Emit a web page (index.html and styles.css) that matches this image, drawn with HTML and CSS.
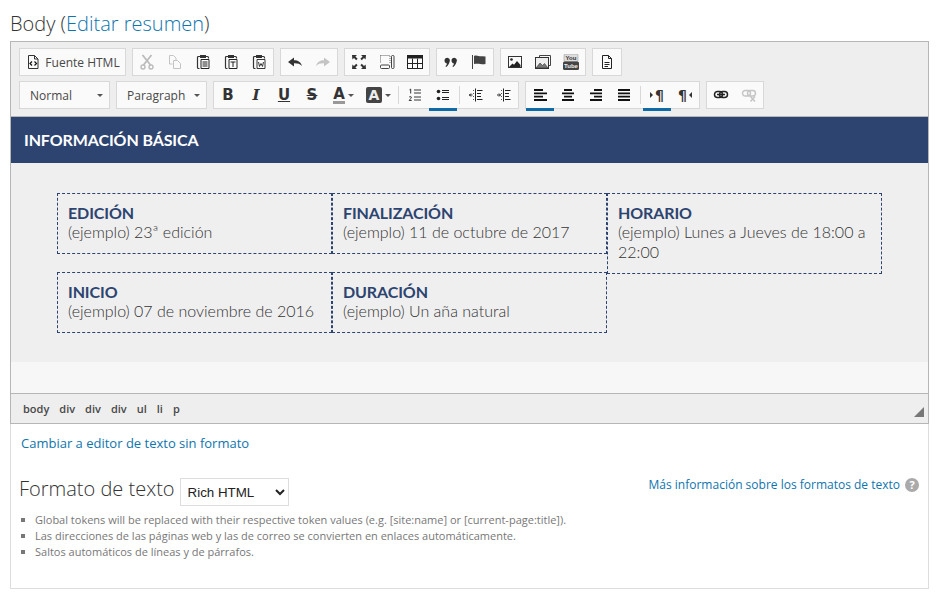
FILE: index.html
```html
<!DOCTYPE html>
<html lang="es">
<head>
    <meta charset="UTF-8">
    <title>Body</title>
    <link rel="stylesheet" href="styles.css">
</head>
<body>
<h2 class="field-title">Body (<a href="#">Editar resumen</a>)</h2>
<div class="field-box">
    <div class="editor">
        <div class="toolbar">
            <div class="toolbar-row">
                <div class="group">
                    <span class="btn btn-text">
                        <svg class="icon" viewBox="0 0 16 16"><path d="M3.500 1.500h6l3.500 3.500v9.500h-9.500z M9.500 1.500v3.500h3.500" fill="none" stroke="#333"/><path d="M7 7.500l-2 2 2 2 M9.500 7.500l2 2-2 2" fill="none" stroke="#111" stroke-width="1.200"/></svg>
                        Fuente HTML
                    </span>
                </div>
                <div class="group">
                    <span class="btn"><svg class="icon" viewBox="0 0 16 16"><path d="M3.500 1l8 10 M12.500 1l-8 10" fill="none" stroke="#bbb" stroke-width="1.800"/><circle cx="4" cy="13" r="2" fill="none" stroke="#bbb" stroke-width="1.400"/><circle cx="12" cy="13" r="2" fill="none" stroke="#bbb" stroke-width="1.400"/></svg></span>
                    <span class="btn"><svg class="icon" viewBox="0 0 16 16"><path d="M2.500 1.500h4l2.500 2.500v2 M2.500 1.500v8.500h3 M6.500 6.500h4l3 3v5h-7z" fill="none" stroke="#c4c4c4"/></svg></span>
                    <span class="btn"><svg class="icon" viewBox="0 0 16 16"><path d="M5 2.500h-1.500q-1 0-1 1v10q0 1 1 1h1 M11 2.500h1.500q1 0 1 1v1" fill="none" stroke="#333" stroke-width="1.200"/><rect x="5" y="1" width="6" height="3" fill="#333"/><path d="M6 5.500h8v9h-8z M7.500 8h5 M7.500 10h5 M7.500 12h5" fill="none" stroke="#222"/></svg></span>
                    <span class="btn"><svg class="icon" viewBox="0 0 16 16"><path d="M5 2.500h-1.500q-1 0-1 1v10q0 1 1 1h1 M11 2.500h1.500q1 0 1 1v1" fill="none" stroke="#333" stroke-width="1.200"/><rect x="5" y="1" width="6" height="3" fill="#333"/><path d="M6 5.500h8v9h-8z M7.500 8h5 M10 8v5" fill="none" stroke="#222"/></svg></span>
                    <span class="btn"><svg class="icon" viewBox="0 0 16 16"><path d="M5 2.500h-1.500q-1 0-1 1v10q0 1 1 1h1 M11 2.500h1.500q1 0 1 1v1" fill="none" stroke="#333" stroke-width="1.200"/><rect x="5" y="1" width="6" height="3" fill="#333"/><path d="M6 5.500h8v9h-8z M7.500 8l1 4.500 1.500-3 1.500 3 1-4.500" fill="none" stroke="#222" stroke-width=".9"/></svg></span>
                </div>
                <div class="group">
                    <span class="btn"><svg class="icon" viewBox="0 0 16 16"><path d="M1 8l6-4.500v2.700c4 0 7 1.800 8 5.800-2-2.200-4.500-2.800-8-2.700v3.200z" fill="#333"/></svg></span>
                    <span class="btn"><svg class="icon" viewBox="0 0 16 16"><path d="M15 8l-6-4.500v2.700c-4 0-7 1.800-8 5.800 2-2.200 4.500-2.800 8-2.700v3.200z" fill="#c4c4c4"/></svg></span>
                </div>
                <div class="group">
                    <span class="btn"><svg class="icon" viewBox="0 0 16 16"><path d="M1 1h5l-1.600 1.600 2.200 2.200-1.400 1.400-2.200-2.200-1.600 1.600z M15 1h-5l1.600 1.600-2.200 2.200 1.400 1.400 2.200-2.200 1.600 1.600z M1 15h5l-1.600-1.600 2.200-2.200-1.400-1.400-2.200 2.200-1.600-1.600z M15 15h-5l1.600-1.600-2.200-2.200 1.400-1.400 2.200 2.200 1.600-1.600z" fill="#333"/></svg></span>
                    <span class="btn"><svg class="icon" viewBox="0 0 16 16"><path d="M1.500 1.500h9.500v8 M1.500 1.500v8" fill="none" stroke="#666" stroke-dasharray="1 1"/><rect x="1.500" y="11" width="9" height="3.500" rx="1" fill="none" stroke="#444"/><rect x="12.500" y="1.500" width="2.500" height="13" rx="1" fill="none" stroke="#444"/></svg></span>
                    <span class="btn"><svg class="icon" viewBox="0 0 16 16"><rect x=".5" y="1.500" width="15" height="13" fill="none" stroke="#222"/><rect x=".5" y="1.500" width="15" height="3" fill="#222"/><path d="M.5 9.500h15 M5.500 4.500v10 M10.500 4.500v10" fill="none" stroke="#222"/></svg></span>
                </div>
                <div class="group">
                    <span class="btn"><svg class="icon" viewBox="0 0 16 16"><path d="M1.500 6.500a2.700 2.700 0 1 1 5 1.400c-.5 2-1.600 3.700-3.300 5.100l-.8-.7c.9-.9 1.400-1.800 1.700-2.900-1.400.1-2.600-1.100-2.600-2.900z M8.500 6.500a2.700 2.700 0 1 1 5 1.400c-.5 2-1.600 3.700-3.300 5.100l-.8-.7c.9-.9 1.400-1.800 1.700-2.900-1.400.1-2.600-1.100-2.600-2.900z" fill="#333"/></svg></span>
                    <span class="btn"><svg class="icon" viewBox="0 0 16 16"><path d="M1.500 1v14" fill="none" stroke="#444"/><path d="M3 2c3-1.500 5 1 8.500.2l3 .3v7.500c-4 1-6.500-1.200-11.500 0z" fill="#444"/></svg></span>
                </div>
                <div class="group">
                    <span class="btn"><svg class="icon" viewBox="0 0 16 16"><rect x="1.500" y="2.500" width="13" height="11" fill="none" stroke="#333"/><circle cx="4.500" cy="5.500" r="1.300" fill="#222"/><path d="M2 13l3.500-3.500 1.500 1.200 3-3.700 3.500 4v2z" fill="#222"/></svg></span>
                    <span class="btn"><svg class="icon" viewBox="0 0 16 16"><path d="M4.500 3.500v-2h11v10h-2" fill="none" stroke="#444"/><rect x=".5" y="3.500" width="13" height="11" fill="#eee" stroke="#333"/><path d="M1 14l4-5 2.500 2.500 2-2 3.500 4.500z" fill="#777" stroke="#333" stroke-width=".6"/></svg></span>
                    <span class="btn"><svg class="icon" viewBox="0 0 16 16"><rect x="1" y="0" width="14" height="7.500" rx="1" fill="#ddd" stroke="#888" stroke-width=".5"/><rect x="0" y="7.500" width="16" height="8.500" rx="1.500" fill="#444"/><text x="8" y="6.200" class="yt-top">You</text><text x="8" y="13.800" class="yt-bot">Tube</text></svg></span>
                </div>
                <div class="group">
                    <span class="btn"><svg class="icon" viewBox="0 0 16 16"><path d="M3.500 1.500h6l3 3v10h-9z M9.500 1.500v3h3" fill="none" stroke="#222"/><path d="M5.500 8.500h5 M5.500 10.500h5 M5.500 12.500h3.500" fill="none" stroke="#222"/></svg></span>
                </div>
            </div>
            <div class="toolbar-row">
                <div class="group combo"><span class="combo-label">Normal</span><i class="caret"></i></div>
                <div class="group combo"><span class="combo-label">Paragraph</span><i class="caret"></i></div>
                <div class="group">
                    <span class="btn"><span class="glyph glyph-b">B</span></span>
                    <span class="btn"><span class="glyph glyph-i">I</span></span>
                    <span class="btn"><span class="glyph glyph-u">U</span></span>
                    <span class="btn"><span class="glyph glyph-s">S</span></span>
                    <span class="btn btn-color"><span class="glyph glyph-a">A</span><i class="caret"></i></span>
                    <span class="btn btn-color"><span class="glyph glyph-bg">A</span><i class="caret"></i></span>
                    <i class="sep"></i>
                    <span class="btn"><svg class="icon" viewBox="0 0 16 16"><path d="M2.500 2.800l1.200-.7v4.400 M2.200 10q1.300-1 2.200 0 0 .9-2.200 3.500h2.500 M7 3h7 M7 6h7 M7 10h7 M7 13h7" fill="none" stroke="#222" stroke-width=".9"/></svg></span>
                    <span class="btn active"><svg class="icon" viewBox="0 0 16 16"><circle cx="3.500" cy="4.500" r="1.800" fill="#222"/><circle cx="3.500" cy="11.500" r="1.800" fill="#222"/><path d="M7 3.500h7 M7 5.500h7 M7 10.500h7 M7 12.500h7" fill="none" stroke="#222"/></svg></span>
                    <i class="sep"></i>
                    <span class="btn"><svg class="icon" viewBox="0 0 16 16"><path d="M7.500 1.500v13" fill="none" stroke="#222"/><path d="M1 8h3.500 M3 6.500l-1.500 1.500 1.500 1.500 M9 3.500h5.500 M9 6.500h4 M9 9.500h4 M9 12.500h5.500" fill="none" stroke="#222"/><path d="M5.500 3v1 M5.500 6v1 M5.500 9v1 M5.500 12v1" stroke="#555"/></svg></span>
                    <span class="btn"><svg class="icon" viewBox="0 0 16 16"><path d="M7.500 1.500v13" fill="none" stroke="#222"/><path d="M1 8h3.500 M3 6.500l1.500 1.500-1.500 1.500 M9 3.500h5.500 M9 6.500h4 M9 9.500h4 M9 12.500h5.500" fill="none" stroke="#222"/><path d="M5.500 3v1 M5.500 6v1 M5.500 9v1 M5.500 12v1" stroke="#555"/></svg></span>
                </div>
                <div class="group">
                    <span class="btn active"><svg class="icon" viewBox="0 0 16 16"><path d="M2 3h9 M2 6.300h13 M2 9.700h9 M2 13h13" fill="none" stroke="#111" stroke-width="1.800"/></svg></span>
                    <span class="btn"><svg class="icon" viewBox="0 0 16 16"><path d="M4 3h8 M2 6.300h12 M4 9.700h8 M2 13h12" fill="none" stroke="#111" stroke-width="1.800"/></svg></span>
                    <span class="btn"><svg class="icon" viewBox="0 0 16 16"><path d="M6 3h8 M2 6.300h12 M6 9.700h8 M2 13h12" fill="none" stroke="#111" stroke-width="1.800"/></svg></span>
                    <span class="btn"><svg class="icon" viewBox="0 0 16 16"><path d="M2 3h12 M2 6.300h12 M2 9.700h12 M2 13h12" fill="none" stroke="#111" stroke-width="1.800"/></svg></span>
                    <i class="sep"></i>
                    <span class="btn active btn-pilcrow"><i class="arrow-right"></i><span class="glyph glyph-p">¶</span></span>
                    <span class="btn btn-pilcrow"><span class="glyph glyph-p">¶</span><i class="arrow-left"></i></span>
                </div>
                <div class="group">
                    <span class="btn"><svg class="icon" viewBox="0 0 16 16"><rect x="1.500" y="4.500" width="8" height="6" rx="3" fill="none" stroke="#222" stroke-width="1.500"/><rect x="6.500" y="4.500" width="8" height="6" rx="3" fill="none" stroke="#222" stroke-width="1.500"/><path d="M4 7.500h8" stroke="#222" stroke-width="1.500"/></svg></span>
                    <span class="btn"><svg class="icon" viewBox="0 0 16 16"><rect x="1.500" y="3.500" width="8" height="5.500" rx="2.700" fill="none" stroke="#c4c4c4" stroke-width="1.400"/><rect x="6.500" y="3.500" width="8" height="5.500" rx="2.700" fill="none" stroke="#c4c4c4" stroke-width="1.400"/><path d="M9.500 9.500l4.500 5 M14 9.500l-4.500 5" stroke="#c4c4c4" stroke-width="1.500"/></svg></span>
                </div>
            </div>
        </div>
        <div class="content">
            <div class="content-head">INFORMACIÓN BÁSICA</div>
            <ul class="info-grid">
                <li class="info-item">
                    <strong>EDICIÓN</strong>
                    <p>(ejemplo) 23ª edición</p>
                </li>
                <li class="info-item">
                    <strong>FINALIZACIÓN</strong>
                    <p>(ejemplo) 11 de octubre de 2017</p>
                </li>
                <li class="info-item info-tall">
                    <strong>HORARIO</strong>
                    <p>(ejemplo) Lunes a Jueves de 18:00 a 22:00</p>
                </li>
                <li class="info-item">
                    <strong>INICIO</strong>
                    <p>(ejemplo) 07 de noviembre de 2016</p>
                </li>
                <li class="info-item">
                    <strong>DURACIÓN</strong>
                    <p>(ejemplo) Un aña natural</p>
                </li>
            </ul>
        </div>
        <div class="content-tail"></div>
        <div class="pathbar">
            <span>body</span><span>div</span><span>div</span><span>div</span><span>ul</span><span>li</span><span>p</span>
            <i class="resizer"></i>
        </div>
    </div>
    <a class="switch-link" href="#">Cambiar a editor de texto sin formato</a>
    <div class="format">
        <div class="format-head">
            <div class="format-pick">
                <label for="format01">Formato de texto</label>
                <select id="format01"><option>Rich HTML</option></select>
            </div>
            <div class="format-help">
                <a href="#">Más información sobre los formatos de texto</a>
                <span class="help-icon">?</span>
            </div>
        </div>
        <ul class="tips">
            <li>Global tokens will be replaced with their respective token values (e.g. [site:name] or [current-page:title]).</li>
            <li>Las direcciones de las páginas web y las de correo se convierten en enlaces automáticamente.</li>
            <li>Saltos automáticos de líneas y de párrafos.</li>
        </ul>
    </div>
</div>
</body>
</html>
```

FILE: styles.css
```css
body {
    margin: 0;
    padding: 10px 7px 0 10px;
    background: #fff;
    font-family: "Open Sans", sans-serif;
    color: #484848;
}
a {
    color: #0f75ad;
    text-decoration: none;
}

.field-title {
    margin: 0;
    height: 31px;
    font-size: 20px;
    line-height: 28px;
    font-weight: 300;
    color: #333;
}

.field-box {
    width: 919px;
    height: 548px;
    box-sizing: border-box;
    border: 1px solid #ddd;
    border-top: 0;
}
.editor {
    margin: 0 -1px;
    border: 1px solid #b6b6b6;
    background: #f8f8f8;
}

/* toolbar */
.toolbar {
    padding: 6px 8px 7px;
    background: #eee;
    border-bottom: 1px solid #b6b6b6;
}
.toolbar-row {
    display: flex;
    gap: 6px;
    height: 28px;
}
.toolbar-row + .toolbar-row {
    margin-top: 5px;
}
.group {
    display: flex;
    align-items: center;
    box-sizing: content-box;
    height: 26px;
    border: 1px solid #d8d8d8;
    background: #fafafa;
}
.btn {
    position: relative;
    display: flex;
    align-items: center;
    justify-content: center;
    width: 28px;
    height: 26px;
    flex: none;
}
.btn-text {
    width: 105px;
    gap: 4px;
    font-size: 12px;
}
.active::after {
    content: "";
    position: absolute;
    left: 0;
    right: 0;
    bottom: -3px;
    height: 3px;
    background: #0f6aa8;
}
.icon {
    width: 16px;
    height: 16px;
    flex: none;
}
.yt-top, .yt-bot {
    font-family: "Liberation Sans", sans-serif;
    font-size: 6px;
    font-weight: bold;
    text-anchor: middle;
}
.yt-top { fill: #333; }
.yt-bot { fill: #eee; }

.sep {
    width: 1px;
    height: 18px;
    margin: 0 2px;
    background: #d8d8d8;
    flex: none;
}

.combo {
    width: 89px;
    justify-content: space-between;
}
.combo-label {
    padding-left: 10px;
    font-size: 12px;
}
.combo .caret {
    margin-right: 6px;
}
.caret {
    width: 0;
    height: 0;
    flex: none;
    border-left: 3px solid transparent;
    border-right: 3px solid transparent;
    border-top: 3px solid #555;
}

.glyph {
    font-family: "DejaVu Sans", sans-serif;
    font-size: 15px;
    line-height: 16px;
    font-weight: bold;
    color: #333;
}
.glyph-i {
    font-family: "DejaVu Serif", serif;
    font-style: italic;
}
.glyph-u {
    text-decoration: underline;
}
.glyph-s {
    text-decoration: line-through;
}
.btn-color {
    width: 35px;
    gap: 3px;
}
.glyph-a {
    border-bottom: 3px solid #999;
    line-height: 14px;
}
.glyph-bg {
    width: 16px;
    height: 16px;
    border-radius: 2px;
    background: #444;
    color: #eee;
    font-size: 14px;
    text-align: center;
}
.btn-pilcrow {
    gap: 2px;
}
.glyph-p {
    font-size: 14px;
}
.arrow-right, .arrow-left {
    width: 0;
    height: 0;
    border-top: 3px solid transparent;
    border-bottom: 3px solid transparent;
}
.arrow-right { border-left: 3px solid #333; }
.arrow-left { border-right: 3px solid #333; }

/* content */
.content {
    height: 245px;
    box-sizing: border-box;
    background: #efefef;
    font-family: "Lato", sans-serif;
}
.content-head {
    height: 46px;
    padding-left: 13px;
    background: #2c446f;
    color: #fff;
    font-size: 16px;
    font-weight: bold;
    letter-spacing: -0.1px;
    line-height: 46px;
}
.info-grid {
    display: grid;
    grid-template-columns: repeat(3, 275px);
    row-gap: 18px;
    align-items: start;
    margin: 0;
    padding: 30px 0 0 46px;
    list-style: none;
}
.info-item {
    box-sizing: border-box;
    height: 61px;
    padding: 9px 10px 0;
    border: 1px dashed #2c446f;
}
.info-tall {
    height: 81px;
    margin-bottom: -20px;
}
.info-item strong {
    display: block;
    margin-bottom: -1px;
    color: #2c446f;
    font-size: 16px;
    font-weight: bold;
    letter-spacing: -0.1px;
    line-height: 20px;
}
.info-item p {
    margin: 0;
    color: #333;
    font-size: 16px;
    font-weight: 300;
    line-height: 20px;
}
.content-tail {
    height: 31px;
    background: #f7f7f7;
}

.pathbar {
    position: relative;
    display: flex;
    align-items: center;
    gap: 10px;
    height: 29px;
    padding-left: 12px;
    background: #eee;
    border-top: 1px solid #b6b6b6;
    font-size: 11px;
    font-weight: 600;
    color: #484848;
}
.resizer {
    position: absolute;
    right: 4px;
    bottom: 6px;
    width: 0;
    height: 0;
    border-left: 10px solid transparent;
    border-bottom: 10px solid #777;
}

/* below the editor */
.switch-link {
    display: block;
    margin: 10px 0 0 10px;
    font-size: 13px;
    line-height: 18px;
}
.format {
    padding: 26px 9px 0 8px;
}
.format-head {
    display: flex;
    justify-content: space-between;
    align-items: flex-start;
}
.format-pick {
    display: flex;
    align-items: flex-start;
    gap: 5px;
}
.format-pick label {
    font-size: 20px;
    font-weight: 300;
    line-height: 22px;
    color: #333;
}
.format-pick select {
    width: 109px;
    height: 28px;
    padding-left: 3px;
    border: 1px solid #ddd;
    background: #fff;
    color: #222;
    font-family: "Liberation Sans", sans-serif;
    font-size: 13.33px;
}
.format-help {
    display: flex;
    align-items: center;
    gap: 5px;
    margin-top: -1px;
    font-size: 12px;
    line-height: 16px;
}
.help-icon {
    width: 14px;
    height: 14px;
    border-radius: 50%;
    background: #aaa;
    color: #fff;
    font-size: 11px;
    font-weight: bold;
    line-height: 14px;
    text-align: center;
}
.tips {
    margin: 6px 0 0;
    padding: 0;
    list-style: none;
    font-size: 11px;
    line-height: 16px;
    color: #777;
}
.tips li {
    position: relative;
    padding-left: 16px;
}
.tips li::before {
    content: "";
    position: absolute;
    left: 2px;
    top: 6px;
    width: 4px;
    height: 4px;
    background: #777;
}
```
